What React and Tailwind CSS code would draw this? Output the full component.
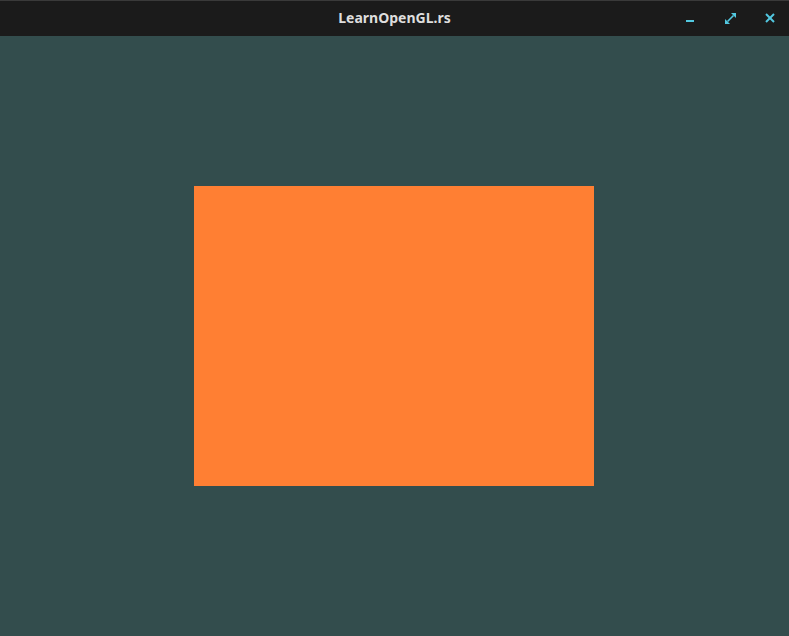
export default function App() {
  return (
    <div className="w-[789px] h-[636px] flex flex-col bg-[#334d4d] overflow-hidden">
      <div className="h-[36px] shrink-0 bg-[#1b1b1b] border-t border-[#3a3a3a] relative flex items-center justify-center">
        <span
          className="text-[14px] font-bold text-[#dedede] leading-none mt-[-2px]"
          style={{ fontFamily: '"Noto Sans", "Open Sans", sans-serif' }}
        >
          LearnOpenGL.rs
        </span>
        <svg width="120" height="36" viewBox="0 0 120 36" className="absolute right-0 top-[-1px] block">
          {/* minimize */}
          <rect x="17" y="20" width="8" height="2" fill="#52c8e0" />
          {/* maximize */}
          <line x1="58.5" y1="21.5" x2="64.5" y2="15.5" stroke="#52c8e0" strokeWidth="1.6" />
          <polygon points="62,13 67,13 67,18" fill="#52c8e0" />
          <polygon points="56,19 56,24 61,24" fill="#52c8e0" />
          {/* close */}
          <g stroke="#52c8e0" strokeWidth="2" fill="none">
            <line x1="97" y1="14" x2="105" y2="22" />
            <line x1="105" y1="14" x2="97" y2="22" />
          </g>
        </svg>
      </div>
      <div className="flex-1 pt-[150px] pl-[194px]">
        <div className="w-[400px] h-[300px] bg-[#ff7f33]" />
      </div>
    </div>
  );
}
